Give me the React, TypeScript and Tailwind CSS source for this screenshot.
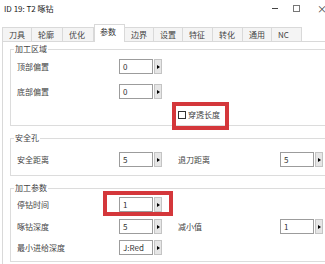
import React from "react";

const tabs = [
  { name: "刀具", w: 30 },
  { name: "轮廓", w: 31 },
  { name: "优化", w: 31 },
  { name: "参数", w: 31, active: true },
  { name: "边界", w: 29 },
  { name: "设置", w: 29 },
  { name: "特征", w: 30 },
  { name: "转化", w: 30 },
  { name: "通用", w: 29 },
  { name: "NC", w: 30 },
];

function Spin({ value }: { value: string }) {
  return (
    <div className="flex items-center w-[43px] h-[15px]">
      <div className="w-[34px] h-[15px] border border-[#9c9c9c] bg-white flex items-center pl-[3px] text-[#333]">
        {value}
      </div>
      <div className="ml-px w-[8px] h-[15px] border border-[#c4c4c4] bg-[#e6e6e6] flex items-center justify-center">
        <div className="w-0 h-0 border-y-[2px] border-y-transparent border-l-[3px] border-l-black" />
      </div>
    </div>
  );
}

function Row({
  label,
  value,
  right,
}: {
  label: string;
  value: string;
  right?: { label: string; value: string };
}) {
  return (
    <div className="flex items-center h-[15px]">
      <div className="w-[102px]">{label}</div>
      <Spin value={value} />
      {right && (
        <>
          <div className="ml-[16px] w-[102px]">{right.label}</div>
          <Spin value={right.value} />
        </>
      )}
    </div>
  );
}

function Group({
  title,
  className,
  children,
}: {
  title: string;
  className: string;
  children: React.ReactNode;
}) {
  return (
    <div className={`relative ml-[7px] w-[330px] border border-[#dcdcdc] pl-[6px] ${className}`}>
      <span className="absolute -top-[6px] left-[3px] bg-white px-px leading-[10px]">{title}</span>
      {children}
    </div>
  );
}

export default function App() {
  return (
    <div
      className="relative w-[325px] h-[264px] overflow-hidden bg-white text-[8px] text-[#444]"
      style={{ fontFamily: '"Noto Sans CJK SC", "Noto Sans", sans-serif' }}
    >
      {/* title bar */}
      <div className="flex items-center h-[17px] pl-[4px]">
        <span className="text-[8px] text-[#222]">ID 19: T2 啄钻</span>
        <span className="ml-auto w-[6px] h-px bg-[#444] mr-[15px]" />
        <span className="w-[7px] h-[7px] border border-[#777] mr-[17px]" />
        <span className="text-[10px] leading-none text-[#444] -mr-[2px]">×</span>
      </div>

      {/* tabs */}
      <div className="relative z-10 flex items-end h-[24px] pl-[2px]">
        {tabs.map((t) =>
          t.active ? (
            <div
              key={t.name}
              className="h-[18px] -mb-px bg-white border border-b-0 border-[#d9d9d9] pl-[5px] pt-[1px] leading-[12px] text-[#333]"
              style={{ width: t.w }}
            >
              {t.name}
            </div>
          ) : (
            <div
              key={t.name}
              className="h-[14px] bg-[#f4f4f4] border border-l-0 border-b-0 border-[#d9d9d9] first:border-l pl-[6px] leading-[13px]"
              style={{ width: t.w }}
            >
              {t.name}
            </div>
          )
        )}
      </div>

      {/* panel */}
      <div className="ml-[2px] h-[230px] border-t border-l border-[#d9d9d9] bg-white pt-[7px]">
        <Group title="加工区域" className="pt-[9px] pb-[3px]">
          <Row label="顶部偏置" value="0" />
          <div className="mt-[10px]">
            <Row label="底部偏置" value="0" />
          </div>
          <div className="mt-[8px] flex items-center h-[15px] pl-[161px]">
            <span className="w-[8px] h-[8px] border border-[#333] bg-white" />
            <span className="ml-[2px]">穿透长度</span>
          </div>
        </Group>

        <Group title="安全孔" className="mt-[12px] pt-[13px] pb-[8px]">
          <Row label="安全距离" value="5" right={{ label: "退刀距离", value: "5" }} />
        </Group>

        <Group title="加工参数" className="mt-[12px] pt-[8px] pb-[6px]">
          <Row label="停钻时间" value="1" />
          <div className="mt-[7px]">
            <Row label="啄钻深度" value="5" right={{ label: "减小值", value: "1" }} />
          </div>
          <div className="mt-[6px]">
            <Row label="最小进给深度" value="J:Red" />
          </div>
        </Group>
      </div>

      {/* annotation boxes */}
      <div className="absolute left-[172px] top-[102px] w-[57px] h-[28px] border-[4px] border-[#d4373b]" />
      <div className="absolute left-[103px] top-[191px] w-[70px] h-[25px] border-[4px] border-[#d4373b]" />
    </div>
  );
}
